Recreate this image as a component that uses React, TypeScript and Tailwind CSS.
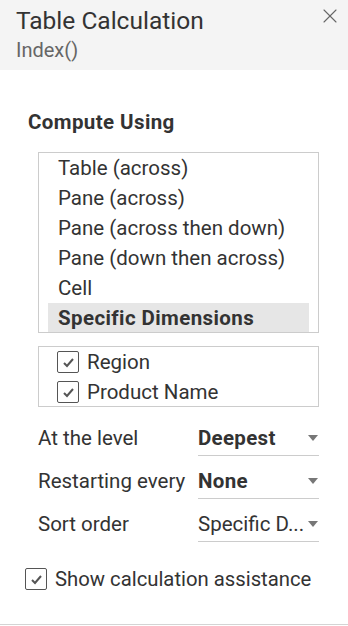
import { X } from "lucide-react";

const options = [
  "Table (across)",
  "Pane (across)",
  "Pane (across then down)",
  "Pane (down then across)",
  "Cell",
  "Specific Dimensions",
];

function Check() {
  return (
    <span className="flex h-[22px] w-[22px] shrink-0 items-center justify-center rounded-[2px] border border-[#555] bg-white">
      <svg width="13" height="11" viewBox="0 0 13 11" fill="none">
        <path d="M2 6 L5 9 L11 2" stroke="#555" strokeWidth="2" />
      </svg>
    </span>
  );
}

function Dropdown({ label, value, bold }: { label: string; value: string; bold?: boolean }) {
  return (
    <div className="flex h-[43px] items-end">
      <div className="flex h-[32px] w-[160px] items-center pb-[3px] text-[20.5px] text-[#333]">{label}</div>
      <div className="flex h-[32px] w-[121px] items-center justify-between border-b border-[#ccc] pb-[3px]">
        <span
          className={
            "whitespace-nowrap text-[20.5px] text-[#333] " + (bold ? "font-bold tracking-[0.3px]" : "")
          }
        >
          {value}
        </span>
        <svg width="10" height="6" viewBox="0 0 10 6" className="mr-[1px] shrink-0">
          <path d="M0 0 L10 0 L5 6 Z" fill="#777" />
        </svg>
      </div>
    </div>
  );
}

export default function App() {
  return (
    <div className="flex h-[626px] w-[348px] flex-col overflow-hidden bg-white font-['Roboto',sans-serif]">
      <div className="relative h-[70px] shrink-0 bg-[#f4f4f4] px-[16px] pt-[5px]">
        <div className="text-[24.5px] leading-[32px] text-[#333]">Table Calculation</div>
        <div className="text-[20px] leading-[26px] text-[#666]">Index()</div>
        <X className="absolute right-[6px] top-[4px] h-[24px] w-[24px] text-[#666]" strokeWidth={1.1} />
      </div>

      <div className="px-[28px] pt-[39px]">
        <div className="text-[20.5px] font-bold leading-[26px] tracking-[0.4px] text-[#333]">Compute Using</div>

        <div className="ml-[10px] mt-[17px] h-[181px] w-[281px] overflow-hidden border border-[#ccc] px-[9px]">
          {options.map((o, i) => (
            <div
              key={o}
              className={
                "h-[30px] pl-[10px] text-[20.5px] leading-[30px] text-[#333] " +
                (i === options.length - 1 ? "bg-[#e6e6e6] font-bold tracking-[0.4px]" : "")
              }
            >
              {o}
            </div>
          ))}
        </div>

        <div className="ml-[10px] mt-[13px] h-[61px] w-[281px] border border-[#ccc] pl-[18px]">
          {["Region", "Product Name"].map((r) => (
            <div key={r} className="flex h-[30px] items-center gap-[8px]">
              <Check />
              <span className="text-[20.5px] text-[#333]">{r}</span>
            </div>
          ))}
        </div>

        <div className="ml-[10px] mt-[6px]">
          <Dropdown label="At the level" value="Deepest" bold />
          <Dropdown label="Restarting every" value="None" bold />
          <Dropdown label="Sort order" value="Specific D..." />
        </div>

        <div className="-ml-[3px] mt-[22px] flex items-center gap-[8px]">
          <Check />
          <span className="text-[20.3px] text-[#333]">Show calculation assistance</span>
        </div>
      </div>

      <div className="flex-1" />
      <div className="mb-[1px] h-[1px] shrink-0 bg-[#d4d4d4]" />
    </div>
  );
}
